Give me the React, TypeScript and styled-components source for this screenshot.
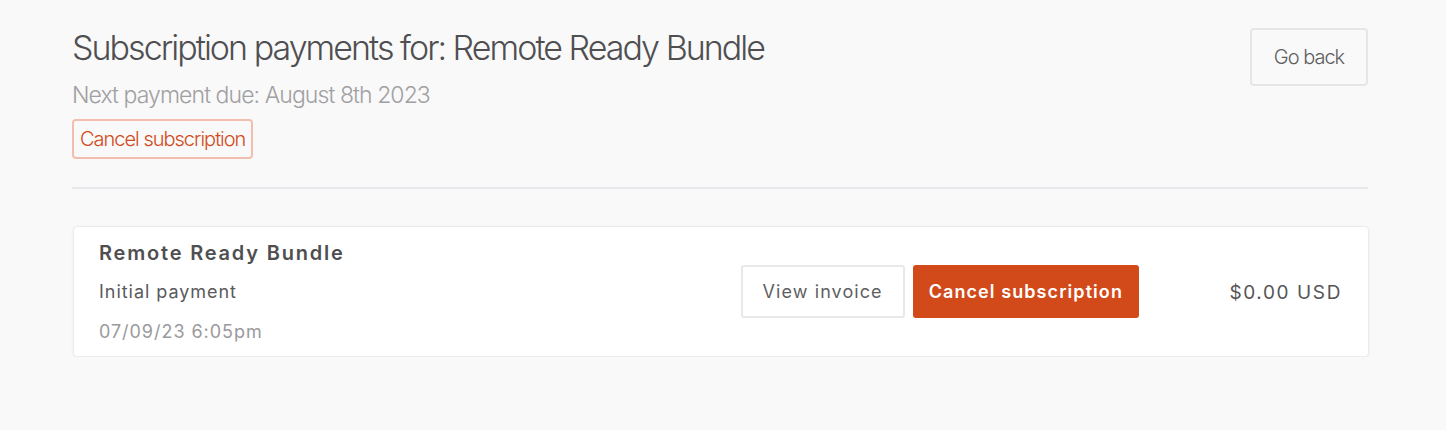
import styled, { createGlobalStyle } from 'styled-components';

const GlobalStyle = createGlobalStyle`
  html, body {
    margin: 0;
    padding: 0;
    background-color: #f9f9f9;
  }
  body {
    font-family: Inter, "Noto Sans", sans-serif;
    color: #555558;
  }
`;

const Page = styled.div`
  box-sizing: border-box;
  width: 1446px;
  padding: 28px 78px 0 72px;
`;

const Header = styled.header`
  display: flex;
  justify-content: space-between;
  align-items: flex-start;
  padding-bottom: 28px;
  border-bottom: 2px solid #e8e8ec;
`;

const TitleBlock = styled.div`
  display: flex;
  flex-direction: column;
  align-items: flex-start;
`;

const Title = styled.h1`
  margin: 0;
  font-size: 34px;
  line-height: 40px;
  font-weight: 300;
  letter-spacing: -0.058em;
  color: #4f4f52;
`;

const Subtitle = styled.p`
  margin: 12px 0 9px;
  font-size: 23px;
  line-height: 30px;
  font-weight: 300;
  letter-spacing: -0.04em;
  color: #a0a0a3;
`;

const GhostButton = styled.button<{ $tone?: 'danger' | 'neutral' }>`
  box-sizing: border-box;
  font-family: Inter, "Noto Sans", sans-serif;
  font-weight: 300;
  letter-spacing: -0.05em;
  background: transparent;
  cursor: pointer;
  border-radius: 4px;
  border: 2px solid ${(p) => (p.$tone === 'danger' ? '#f2bfae' : '#e6e6e8')};
  color: ${(p) => (p.$tone === 'danger' ? '#d24a1a' : '#5d5d60')};
`;

const SmallCancel = styled(GhostButton)`
  height: 40px;
  padding: 0 6px;
  font-size: 20px;
`;

const BackButton = styled(GhostButton)`
  width: 118px;
  height: 58px;
  font-size: 20px;
`;

const Card = styled.section`
  display: flex;
  align-items: center;
  margin-top: 37px;
  margin-left: 1px;
  margin-right: -1px;
  padding: 12px 26px 9px 25px;
  background: #ffffff;
  border: 1px solid #ececef;
  border-radius: 4px;
  box-shadow: 0 1px 3px rgba(0, 0, 0, 0.06);
`;

const Details = styled.div`
  flex: 1;
  display: flex;
  flex-direction: column;
  letter-spacing: 0.06em;
`;

const ItemName = styled.div`
  font-size: 20px;
  line-height: 28px;
  font-weight: 600;
  letter-spacing: 0.09em;
  color: #4f4f52;
`;

const ItemLine = styled.div<{ $muted?: boolean }>`
  margin-top: 10px;
  font-size: 18px;
  line-height: 30px;
  color: ${(p) => (p.$muted ? '#9a9a9d' : '#5a5a5d')};
`;

const Actions = styled.div`
  display: flex;
  gap: 8px;
  margin-bottom: 4px;
`;

const ActionButton = styled.button<{ $primary?: boolean }>`
  box-sizing: border-box;
  height: 53px;
  padding: ${(p) => (p.$primary ? '0 14px' : '0 20px')};
  font-family: Inter, "Noto Sans", sans-serif;
  font-size: 18px;
  letter-spacing: 0.06em;
  border-radius: 3px;
  cursor: pointer;
  font-weight: ${(p) => (p.$primary ? 600 : 400)};
  background: ${(p) => (p.$primary ? '#d24a1a' : '#ffffff')};
  color: ${(p) => (p.$primary ? '#ffffff' : '#5f5f62')};
  border: 2px solid ${(p) => (p.$primary ? '#d24a1a' : '#e8e8ea')};
`;

const Amount = styled.div`
  width: 203px;
  margin-bottom: 2px;
  text-align: right;
  font-size: 19px;
  letter-spacing: 0.085em;
  color: #555558;
`;

export default function App() {
  return (
    <>
      <GlobalStyle />
      <Page>
        <Header>
          <TitleBlock>
            <Title>Subscription payments for: Remote Ready Bundle</Title>
            <Subtitle>Next payment due: August 8th 2023</Subtitle>
            <SmallCancel $tone="danger">Cancel subscription</SmallCancel>
          </TitleBlock>
          <BackButton>Go back</BackButton>
        </Header>
        <Card>
          <Details>
            <ItemName>Remote Ready Bundle</ItemName>
            <ItemLine>Initial payment</ItemLine>
            <ItemLine $muted>07/09/23 6:05pm</ItemLine>
          </Details>
          <Actions>
            <ActionButton>View invoice</ActionButton>
            <ActionButton $primary>Cancel subscription</ActionButton>
          </Actions>
          <Amount>$0.00 USD</Amount>
        </Card>
      </Page>
    </>
  );
}
